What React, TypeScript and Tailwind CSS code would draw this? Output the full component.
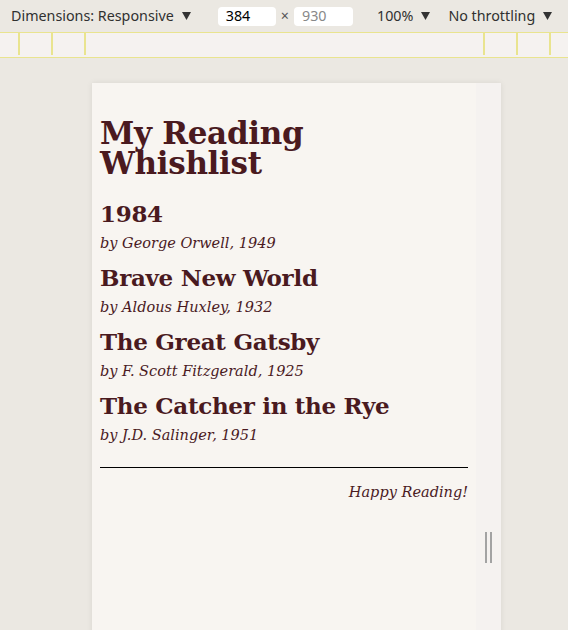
import React from 'react';

interface Book {
  title: string;
  author: string;
  year: number;
}

const books: Book[] = [
  { title: '1984', author: 'George Orwell', year: 1949 },
  { title: 'Brave New World', author: 'Aldous Huxley', year: 1932 },
  { title: 'The Great Gatsby', author: 'F. Scott Fitzgerald', year: 1925 },
  { title: 'The Catcher in the Rye', author: 'J.D. Salinger', year: 1951 },
];

function Caret() {
  return (
    <svg className="ml-[8px] h-[8px] w-[9px]" viewBox="0 0 9 8" fill="#333">
      <path d="M0 0h9L4.5 8z" />
    </svg>
  );
}

function Toolbar() {
  return (
    <div className="flex h-8 items-center font-['Noto_Sans',sans-serif] text-[14.3px] text-[#303030]">
      <div className="ml-[11px] flex items-center">
        Dimensions: Responsive
        <Caret />
      </div>
      <div className="ml-[27px] flex h-[19px] w-[58px] items-center rounded-[4px] bg-white pl-[8px] text-black">384</div>
      <span className="mx-[5px] text-[#555]">×</span>
      <div className="flex h-[19px] w-[59px] items-center rounded-[4px] bg-white pl-[8px] text-[#888]">930</div>
      <div className="ml-[24px] flex items-center">
        100%
        <Caret />
      </div>
      <div className="ml-[18px] flex items-center">
        No throttling
        <Caret />
      </div>
    </div>
  );
}

function Ruler() {
  return (
    <div className="flex h-[26px] border-y border-[#e9e48f] bg-[#f5f2f0] pb-[2px]">
      <div className="w-[20px] border-r-2 border-[#e9e48f]" />
      <div className="w-[33px] border-r-2 border-[#e9e48f]" />
      <div className="w-[33px] border-r-2 border-[#e9e48f]" />
      <div className="flex-1 border-r-2 border-[#e9e48f]" />
      <div className="w-[33px] border-r-2 border-[#e9e48f]" />
      <div className="w-[33px] border-r-2 border-[#e9e48f]" />
      <div className="w-[17px]" />
    </div>
  );
}

function Wishlist() {
  return (
    <div className="w-[384px] bg-[#f8f5f1] px-[8px] pt-[35px] font-['DejaVu_Serif',serif] text-[#4a1a1f]">
      <h1 className="text-[31px] font-bold leading-[30px] tracking-[-0.3px]">
        My Reading
        <br />
        Whishlist
      </h1>
      <div className="mt-[22px]">
        {books.map((b) => (
          <div key={b.title} className="mb-[8px]">
            <h2 className="text-[23px] font-bold leading-[28px] tracking-[-0.3px]">{b.title}</h2>
            <p className="mt-[3px] text-[14.5px] italic leading-[25px]">
              by {b.author}, {b.year}
            </p>
          </div>
        ))}
      </div>
      <hr className="mt-[19px] border-t border-black" />
      <p className="mt-[12px] text-right text-[14.5px] italic leading-[24px]">Happy Reading!</p>
      <div className="h-[200px]" />
    </div>
  );
}

export default function App() {
  return (
    <div className="h-[630px] w-[568px] overflow-hidden bg-[#ebe8e2]">
      <Toolbar />
      <Ruler />
      <div className="pl-[92px] pt-[25px]">
        <div className="flex w-[409px] shadow-[0_0_6px_rgba(0,0,0,0.08)]">
          <Wishlist />
          <div className="flex w-[25px] flex-col bg-[#f5f2f0] pl-[9px] pt-[449px]">
            <div className="flex h-[31px] gap-[3px]">
              <div className="w-[2px] bg-[#a3a3a3]" />
              <div className="w-[2px] bg-[#a3a3a3]" />
            </div>
          </div>
        </div>
      </div>
    </div>
  );
}
